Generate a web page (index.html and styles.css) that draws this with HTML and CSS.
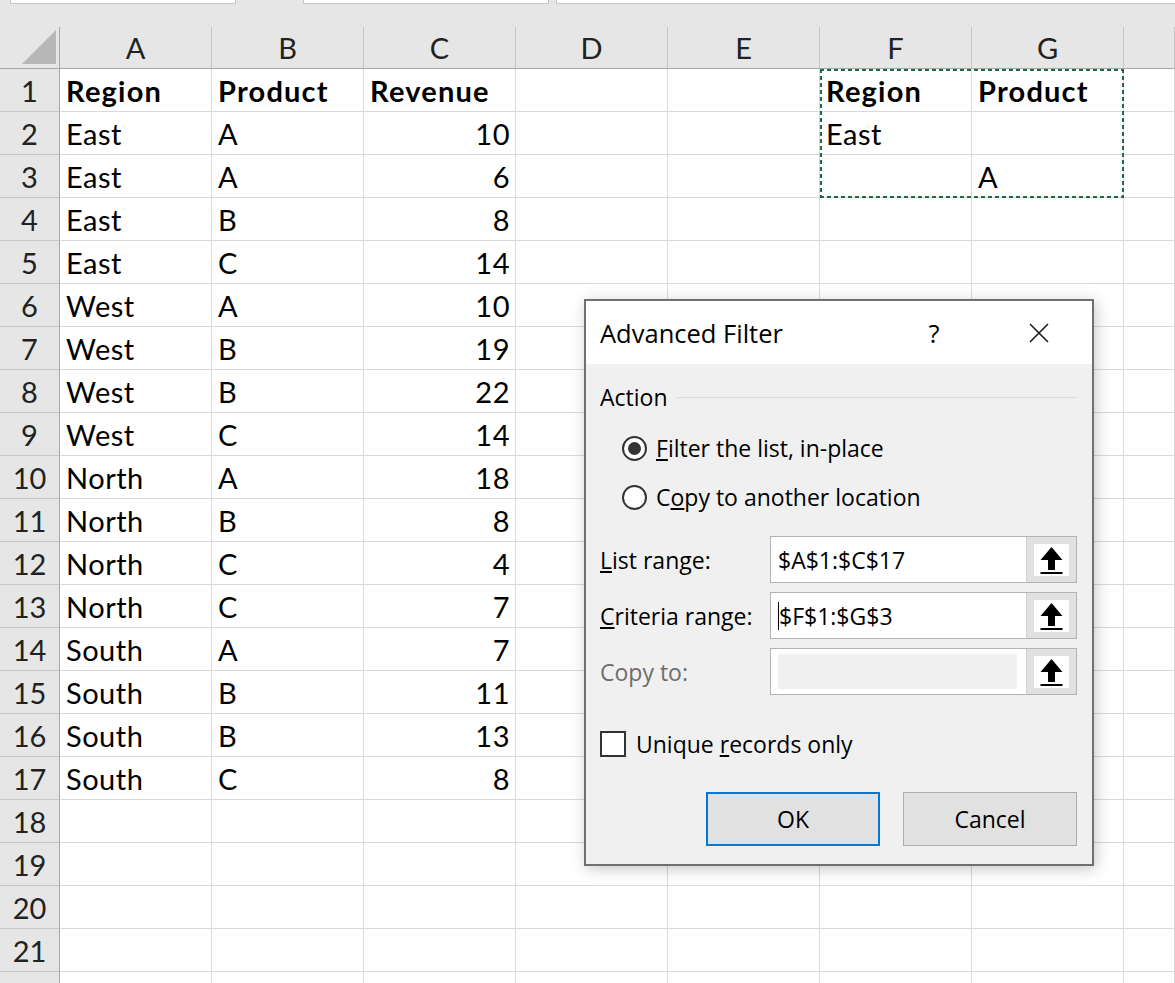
FILE: index.html
```html
<!DOCTYPE html>
<html lang="en">
<head>
    <meta charset="UTF-8">
    <title>Advanced Filter</title>
    <link rel="stylesheet" href="styles.css">
</head>
<body>

<div class="formula-bar">
    <div class="fbox fbox-name"></div>
    <div class="fbox fbox-mid"></div>
    <div class="fbox fbox-wide"></div>
</div>

<div class="sheet">
    <div class="corner"><span class="tri"></span></div>
    <div class="ch">A</div><div class="ch">B</div><div class="ch">C</div><div class="ch">D</div>
    <div class="ch">E</div><div class="ch">F</div><div class="ch">G</div><div class="ch"></div>

    <div class="rh">1</div>
    <div class="c b">Region</div><div class="c b">Product</div><div class="c b">Revenue</div><div class="c"></div>
    <div class="c"></div><div class="c b">Region</div><div class="c b">Product</div><div class="c"></div>

    <div class="rh">2</div>
    <div class="c">East</div><div class="c">A</div><div class="c num">10</div><div class="c"></div>
    <div class="c"></div><div class="c">East</div><div class="c"></div><div class="c"></div>

    <div class="rh">3</div>
    <div class="c">East</div><div class="c">A</div><div class="c num">6</div><div class="c"></div>
    <div class="c"></div><div class="c"></div><div class="c">A</div><div class="c"></div>

    <div class="rh">4</div>
    <div class="c">East</div><div class="c">B</div><div class="c num">8</div><div class="c"></div>
    <div class="c"></div><div class="c"></div><div class="c"></div><div class="c"></div>

    <div class="rh">5</div>
    <div class="c">East</div><div class="c">C</div><div class="c num">14</div><div class="c"></div>
    <div class="c"></div><div class="c"></div><div class="c"></div><div class="c"></div>

    <div class="rh">6</div>
    <div class="c">West</div><div class="c">A</div><div class="c num">10</div><div class="c"></div>
    <div class="c"></div><div class="c"></div><div class="c"></div><div class="c"></div>

    <div class="rh">7</div>
    <div class="c">West</div><div class="c">B</div><div class="c num">19</div><div class="c"></div>
    <div class="c"></div><div class="c"></div><div class="c"></div><div class="c"></div>

    <div class="rh">8</div>
    <div class="c">West</div><div class="c">B</div><div class="c num">22</div><div class="c"></div>
    <div class="c"></div><div class="c"></div><div class="c"></div><div class="c"></div>

    <div class="rh">9</div>
    <div class="c">West</div><div class="c">C</div><div class="c num">14</div><div class="c"></div>
    <div class="c"></div><div class="c"></div><div class="c"></div><div class="c"></div>

    <div class="rh">10</div>
    <div class="c">North</div><div class="c">A</div><div class="c num">18</div><div class="c"></div>
    <div class="c"></div><div class="c"></div><div class="c"></div><div class="c"></div>

    <div class="rh">11</div>
    <div class="c">North</div><div class="c">B</div><div class="c num">8</div><div class="c"></div>
    <div class="c"></div><div class="c"></div><div class="c"></div><div class="c"></div>

    <div class="rh">12</div>
    <div class="c">North</div><div class="c">C</div><div class="c num">4</div><div class="c"></div>
    <div class="c"></div><div class="c"></div><div class="c"></div><div class="c"></div>

    <div class="rh">13</div>
    <div class="c">North</div><div class="c">C</div><div class="c num">7</div><div class="c"></div>
    <div class="c"></div><div class="c"></div><div class="c"></div><div class="c"></div>

    <div class="rh">14</div>
    <div class="c">South</div><div class="c">A</div><div class="c num">7</div><div class="c"></div>
    <div class="c"></div><div class="c"></div><div class="c"></div><div class="c"></div>

    <div class="rh">15</div>
    <div class="c">South</div><div class="c">B</div><div class="c num">11</div><div class="c"></div>
    <div class="c"></div><div class="c"></div><div class="c"></div><div class="c"></div>

    <div class="rh">16</div>
    <div class="c">South</div><div class="c">B</div><div class="c num">13</div><div class="c"></div>
    <div class="c"></div><div class="c"></div><div class="c"></div><div class="c"></div>

    <div class="rh">17</div>
    <div class="c">South</div><div class="c">C</div><div class="c num">8</div><div class="c"></div>
    <div class="c"></div><div class="c"></div><div class="c"></div><div class="c"></div>

    <div class="rh">18</div>
    <div class="c"></div><div class="c"></div><div class="c"></div><div class="c"></div>
    <div class="c"></div><div class="c"></div><div class="c"></div><div class="c"></div>

    <div class="rh">19</div>
    <div class="c"></div><div class="c"></div><div class="c"></div><div class="c"></div>
    <div class="c"></div><div class="c"></div><div class="c"></div><div class="c"></div>

    <div class="rh">20</div>
    <div class="c"></div><div class="c"></div><div class="c"></div><div class="c"></div>
    <div class="c"></div><div class="c"></div><div class="c"></div><div class="c"></div>

    <div class="rh">21</div>
    <div class="c"></div><div class="c"></div><div class="c"></div><div class="c"></div>
    <div class="c"></div><div class="c"></div><div class="c"></div><div class="c"></div>

    <div class="rh"></div>
    <div class="c"></div><div class="c"></div><div class="c"></div><div class="c"></div>
    <div class="c"></div><div class="c"></div><div class="c"></div><div class="c"></div>
</div>

<!-- copy marquee round the criteria range F1:G3 -->
<div class="marquee"></div>

<div class="dialog">
    <div class="dialog-title">
        <span class="title-text">Advanced Filter</span>
        <span class="help">?</span>
        <svg class="close" width="20" height="20" viewBox="0 0 20 20">
            <path d="M1 1 L19 19 M19 1 L1 19" stroke="#1a1a1a" stroke-width="1.6" fill="none"/>
        </svg>
    </div>

    <div class="dialog-body">
        <div class="group-head">
            <span>Action</span>
            <span class="group-line"></span>
        </div>

        <div class="radio-row first">
            <span class="radio checked"></span>
            <span><u>F</u>ilter the list, in-place</span>
        </div>
        <div class="radio-row">
            <span class="radio"></span>
            <span>C<u>o</u>py to another location</span>
        </div>

        <div class="field-row first">
            <span class="field-label"><u>L</u>ist range:</span>
            <div class="range-box">
                <span class="range-text">$A$1:$C$17</span>
                <span class="pick-btn">
                    <svg width="35" height="32" viewBox="0 0 35 32">
                        <rect width="35" height="32" fill="#fff"/>
                        <polygon points="17.5,3 6.5,16 14,16 14,26 21,26 21,16 28.5,16" fill="#000"/>
                        <rect x="6.5" y="28" width="22" height="2" fill="#000"/>
                    </svg>
                </span>
            </div>
        </div>
        <div class="field-row">
            <span class="field-label"><u>C</u>riteria range:</span>
            <div class="range-box">
                <span class="range-text"><span class="caret"></span>$F$1:$G$3</span>
                <span class="pick-btn">
                    <svg width="35" height="32" viewBox="0 0 35 32">
                        <rect width="35" height="32" fill="#fff"/>
                        <polygon points="17.5,3 6.5,16 14,16 14,26 21,26 21,16 28.5,16" fill="#000"/>
                        <rect x="6.5" y="28" width="22" height="2" fill="#000"/>
                    </svg>
                </span>
            </div>
        </div>
        <div class="field-row">
            <span class="field-label disabled">Copy to:</span>
            <div class="range-box">
                <span class="range-text"><span class="range-off"></span></span>
                <span class="pick-btn">
                    <svg width="35" height="32" viewBox="0 0 35 32">
                        <rect width="35" height="32" fill="#fff"/>
                        <polygon points="17.5,3 6.5,16 14,16 14,26 21,26 21,16 28.5,16" fill="#000"/>
                        <rect x="6.5" y="28" width="22" height="2" fill="#000"/>
                    </svg>
                </span>
            </div>
        </div>

        <div class="check-row">
            <span class="checkbox"></span>
            <span>Unique <u>r</u>ecords only</span>
        </div>

        <div class="button-row">
            <button class="btn btn-default">OK</button>
            <button class="btn">Cancel</button>
        </div>
    </div>
</div>

</body>
</html>
```

FILE: styles.css
```css
body {
    margin: 0;
    background-color: #fff;
    color: #000;
    font-family: 'Lato', 'Liberation Sans', sans-serif;
    overflow: hidden;
    position: relative;
    height: 983px;
}

.formula-bar {
    display: flex;
    height: 27px;
    background-color: #e6e6e6;
}

.fbox {
    height: 4px;
    box-sizing: border-box;
    background-color: #fff;
    border: 1px solid #c6c6c6;
    border-top: none;
}

.fbox-name {
    margin-left: 10px;
    width: 226px;
}

.fbox-mid {
    margin-left: 67px;
    width: 246px;
}

.fbox-wide {
    margin-left: 7px;
    flex: 1;
    border-right: none;
}

.sheet {
    display: grid;
    grid-template-columns: 60px repeat(7, 152px) 1fr;
    grid-template-rows: 42px repeat(21, 43px) 14px;
    font-size: 29px;
}

.corner {
    background-color: #e6e6e6;
    border-right: 1px solid #a6a6a6;
    border-bottom: 1px solid #a6a6a6;
    position: relative;
}

.tri {
    position: absolute;
    left: 22px;
    top: 3px;
    width: 0;
    height: 0;
    border-left: 34px solid transparent;
    border-bottom: 34px solid #b7b7b7;
}

.ch {
    background-color: #e6e6e6;
    border-right: 1px solid #c6c6c6;
    border-bottom: 1px solid #a6a6a6;
    text-align: center;
    line-height: 42px;
    color: #222;
}

.rh {
    background-color: #e6e6e6;
    border-right: 1px solid #a6a6a6;
    border-bottom: 1px solid #c6c6c6;
    text-align: center;
    line-height: 44px;
    color: #222;
}

.c {
    border-right: 1px solid #d9d9d9;
    border-bottom: 1px solid #d9d9d9;
    padding: 0 5px 0 6px;
    line-height: 44px;
    letter-spacing: 0.5px;
    white-space: nowrap;
    overflow: hidden;
}

.c.b {
    font-weight: bold;
    letter-spacing: 1.2px;
}

.c.num {
    text-align: right;
}

.marquee {
    position: absolute;
    left: 820px;
    top: 69px;
    width: 304px;
    height: 129px;
    background:
        repeating-linear-gradient(90deg, #1f6b45 0 4px, transparent 4px 7px) top / 100% 2px no-repeat,
        repeating-linear-gradient(90deg, #1f6b45 0 4px, transparent 4px 7px) bottom / 100% 2px no-repeat,
        repeating-linear-gradient(180deg, #1f6b45 0 4px, transparent 4px 7px) left / 2px 100% no-repeat,
        repeating-linear-gradient(180deg, #1f6b45 0 4px, transparent 4px 7px) right / 2px 100% no-repeat;
}

/* dialog */

.dialog {
    position: absolute;
    left: 584px;
    top: 299px;
    width: 510px;
    height: 567px;
    box-sizing: border-box;
    border: 2px solid #707070;
    background-color: #f0f0f0;
    box-shadow: 2px 3px 14px rgba(0, 0, 0, 0.22);
    font-family: 'Open Sans', 'Noto Sans', sans-serif;
    font-size: 23px;
    color: #000;
}

.dialog-title {
    display: flex;
    align-items: center;
    height: 63px;
    padding-left: 14px;
    background-color: #fff;
    font-size: 25.5px;
}

.title-text {
    flex: 1;
}

.help {
    width: 24px;
    text-align: center;
    margin-right: 83px;
}

.close {
    margin-right: 43px;
}

.dialog-body {
    padding: 0 15px 0 14px;
}

.group-head {
    display: flex;
    align-items: center;
    height: 30px;
    margin-top: 18px;
}

.group-line {
    flex: 1;
    height: 1px;
    margin-left: 8px;
    background-color: #dcdcdc;
}

.radio-row {
    display: flex;
    align-items: center;
    height: 30px;
    margin-top: 19px;
    margin-left: 22px;
}

.radio-row.first {
    margin-top: 21px;
}

.radio {
    width: 25px;
    height: 25px;
    box-sizing: border-box;
    border: 2px solid #333;
    border-radius: 50%;
    background-color: #fff;
    margin-right: 9px;
    position: relative;
}

.radio.checked::after {
    content: "";
    position: absolute;
    left: 4px;
    top: 4px;
    width: 13px;
    height: 13px;
    border-radius: 50%;
    background-color: #333;
}

.field-row {
    display: flex;
    align-items: center;
    margin-top: 9px;
}

.field-row.first {
    margin-top: 24px;
}

.field-label {
    width: 170px;
}

.field-label.disabled {
    color: #6d6d6d;
}

.range-box {
    display: flex;
    width: 307px;
    height: 47px;
    box-sizing: border-box;
    border: 1px solid #b4b4b4;
    background-color: #fff;
}

.range-text {
    flex: 1;
    display: flex;
    align-items: center;
    padding-left: 7px;
}

.caret {
    width: 1px;
    height: 28px;
    background-color: #000;
}

.range-off {
    flex: 1;
    height: 35px;
    margin-right: 9px;
    background-color: #f0f0f0;
}

.pick-btn {
    width: 49px;
    display: flex;
    align-items: center;
    justify-content: center;
    background-color: #e1e1e1;
    border-left: 1px solid #d4d4d4;
}

.check-row {
    display: flex;
    align-items: center;
    height: 26px;
    margin-top: 36px;
}

.checkbox {
    width: 26px;
    height: 26px;
    box-sizing: border-box;
    border: 2px solid #333;
    background-color: #fff;
    margin-right: 10px;
}

.button-row {
    display: flex;
    justify-content: flex-end;
    gap: 23px;
    margin-top: 35px;
}

.btn {
    width: 174px;
    height: 54px;
    box-sizing: border-box;
    border: 1px solid #adadad;
    background-color: #e1e1e1;
    font-family: 'Open Sans', 'Noto Sans', sans-serif;
    font-size: 23px;
    color: #000;
    padding: 0;
}

.btn-default {
    border: 2px solid #0078d7;
}
```
